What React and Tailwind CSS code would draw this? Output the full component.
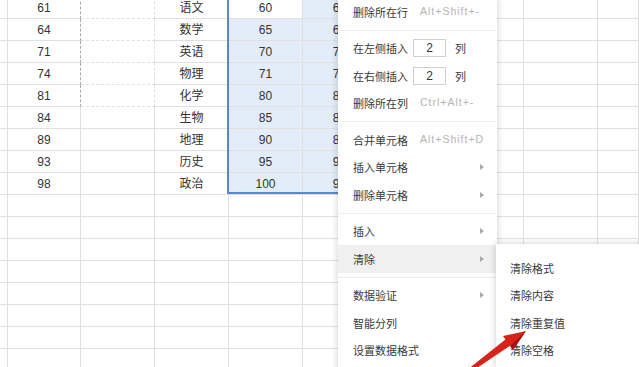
import React from "react";

const col1 = ["61", "64", "71", "74", "81", "84", "89", "93", "98"];
const col3 = ["语文", "数学", "英语", "物理", "化学", "生物", "地理", "历史", "政治"];
const col4 = ["60", "65", "70", "71", "80", "85", "90", "95", "100"];
const col5 = ["62", "66", "73", "75", "82", "86", "88", "92", "96"];

const ROWS = 17;
const COLS = 10;

function Cell({ r, c }) {
  let text = "";
  let cls =
    "h-[22px] border-r border-b border-[#e0e0e0] flex items-center justify-center text-[12px] text-[#333] overflow-hidden whitespace-nowrap";
  if (r < 9) {
    if (c === 1) text = col1[r];
    if (c === 3) text = col3[r];
    if (c === 4) text = col4[r];
    if (c === 5) text = col5[r];
    if (c === 4 && r > 0) cls += " bg-[#e2edf9] border-[#d3dfee]";
    if (c === 5) cls += " bg-[#e2edf9] border-[#d3dfee]";
  }
  if (r < 5 && c === 1) cls += " [border-right-style:dashed] border-r-[#a9a9a9]";
  if (r < 5 && c === 2) cls += " border-dashed border-[#a9a9a9]";
  return <div className={cls}>{text}</div>;
}

function Tri() {
  return (
    <svg width="4" height="6" viewBox="0 0 4 6" className="ml-auto">
      <path d="M0 0 L4 3 L0 6 Z" fill="#a8a8a8" />
    </svg>
  );
}

function Item({ label, shortcut, arrow, hl }) {
  return (
    <div
      className={
        "h-[27.5px] flex items-center pl-[15px] pr-[13px] text-[11px] text-[#3a3a3a] " +
        (hl ? "bg-[#f0f0f0]" : "")
      }
    >
      <span className="w-[67px] shrink-0 whitespace-nowrap">{label}</span>
      {shortcut && (
        <span className="text-[10.5px] text-[#b4b4b4] tracking-[1px] whitespace-nowrap font-['Liberation_Sans',sans-serif]">
          {shortcut}
        </span>
      )}
      {arrow && <Tri />}
    </div>
  );
}

function InputItem({ label }) {
  return (
    <div className="h-[27.5px] flex items-center pl-[15px] text-[11px] text-[#3a3a3a]">
      <span className="w-[60px] shrink-0 whitespace-nowrap">{label}</span>
      <div className="w-[33px] h-[18px] border border-[#d0d0d0] flex items-center justify-center text-[12px] font-['Liberation_Sans',sans-serif] text-[#333]">
        2
      </div>
      <span className="ml-[9px]">列</span>
    </div>
  );
}

function Sep() {
  return <div className="my-[4px] h-px bg-[#efefef]" />;
}

export default function App() {
  const cells = [];
  for (let r = 0; r < ROWS; r++) {
    for (let c = 0; c < COLS; c++) {
      cells.push(<Cell key={r + "-" + c} r={r} c={c} />);
    }
  }
  return (
    <div className="relative w-[639px] h-[367px] overflow-hidden bg-white font-['Liberation_Sans','Noto_Sans_CJK_SC',sans-serif]">
      <div className="grid grid-cols-[8px_73px_74px_74px_74px_74px_74px_73px_74px_1fr] -mt-[3px]">
        {cells}
      </div>

      {/* selection border */}
      <div className="absolute left-[227px] top-[-10px] w-[200px] h-[204px] border-2 border-[#5a88c8]" />

      {/* context menu */}
      <div className="absolute left-[338px] top-[-2px] w-[159px] h-[380px] bg-white shadow-[0_0_7px_rgba(0,0,0,0.2)] font-['Noto_Sans_CJK_SC',sans-serif]">
        <Item label="删除所在行" shortcut="Alt+Shift+-" />
        <Sep />
        <InputItem label="在左侧插入" />
        <InputItem label="在右侧插入" />
        <Item label="删除所在列" shortcut="Ctrl+Alt+-" />
        <Sep />
        <Item label="合并单元格" shortcut="Alt+Shift+D" />
        <Item label="插入单元格" arrow />
        <Item label="删除单元格" arrow />
        <Sep />
        <Item label="插入" arrow />
        <Item label="清除" arrow hl />
        <Sep />
        <Item label="数据验证" arrow />
        <Item label="智能分列" />
        <Item label="设置数据格式" />
      </div>

      {/* submenu */}
      <div className="absolute left-[496px] top-[244px] w-[160px] h-[140px] bg-white shadow-[0_0_7px_rgba(0,0,0,0.2)] pt-[10px] font-['Noto_Sans_CJK_SC',sans-serif]">
        {["清除格式", "清除内容", "清除重复值", "清除空格"].map((t) => (
          <div key={t} className="h-[27.5px] flex items-center pl-[14px] text-[11px] text-[#3a3a3a]">
            {t}
          </div>
        ))}
      </div>

      {/* red arrow */}
      <svg className="absolute left-0 top-0 pointer-events-none" width="639" height="367">
        <polygon points="467,370 471,372 511,345 506,339" fill="#d8231a" />
        <polygon points="526,331 503,336 513,350" fill="#d8231a" />
        <polygon points="526,331 513,350 510,346" fill="#a8130d" />
      </svg>
    </div>
  );
}
